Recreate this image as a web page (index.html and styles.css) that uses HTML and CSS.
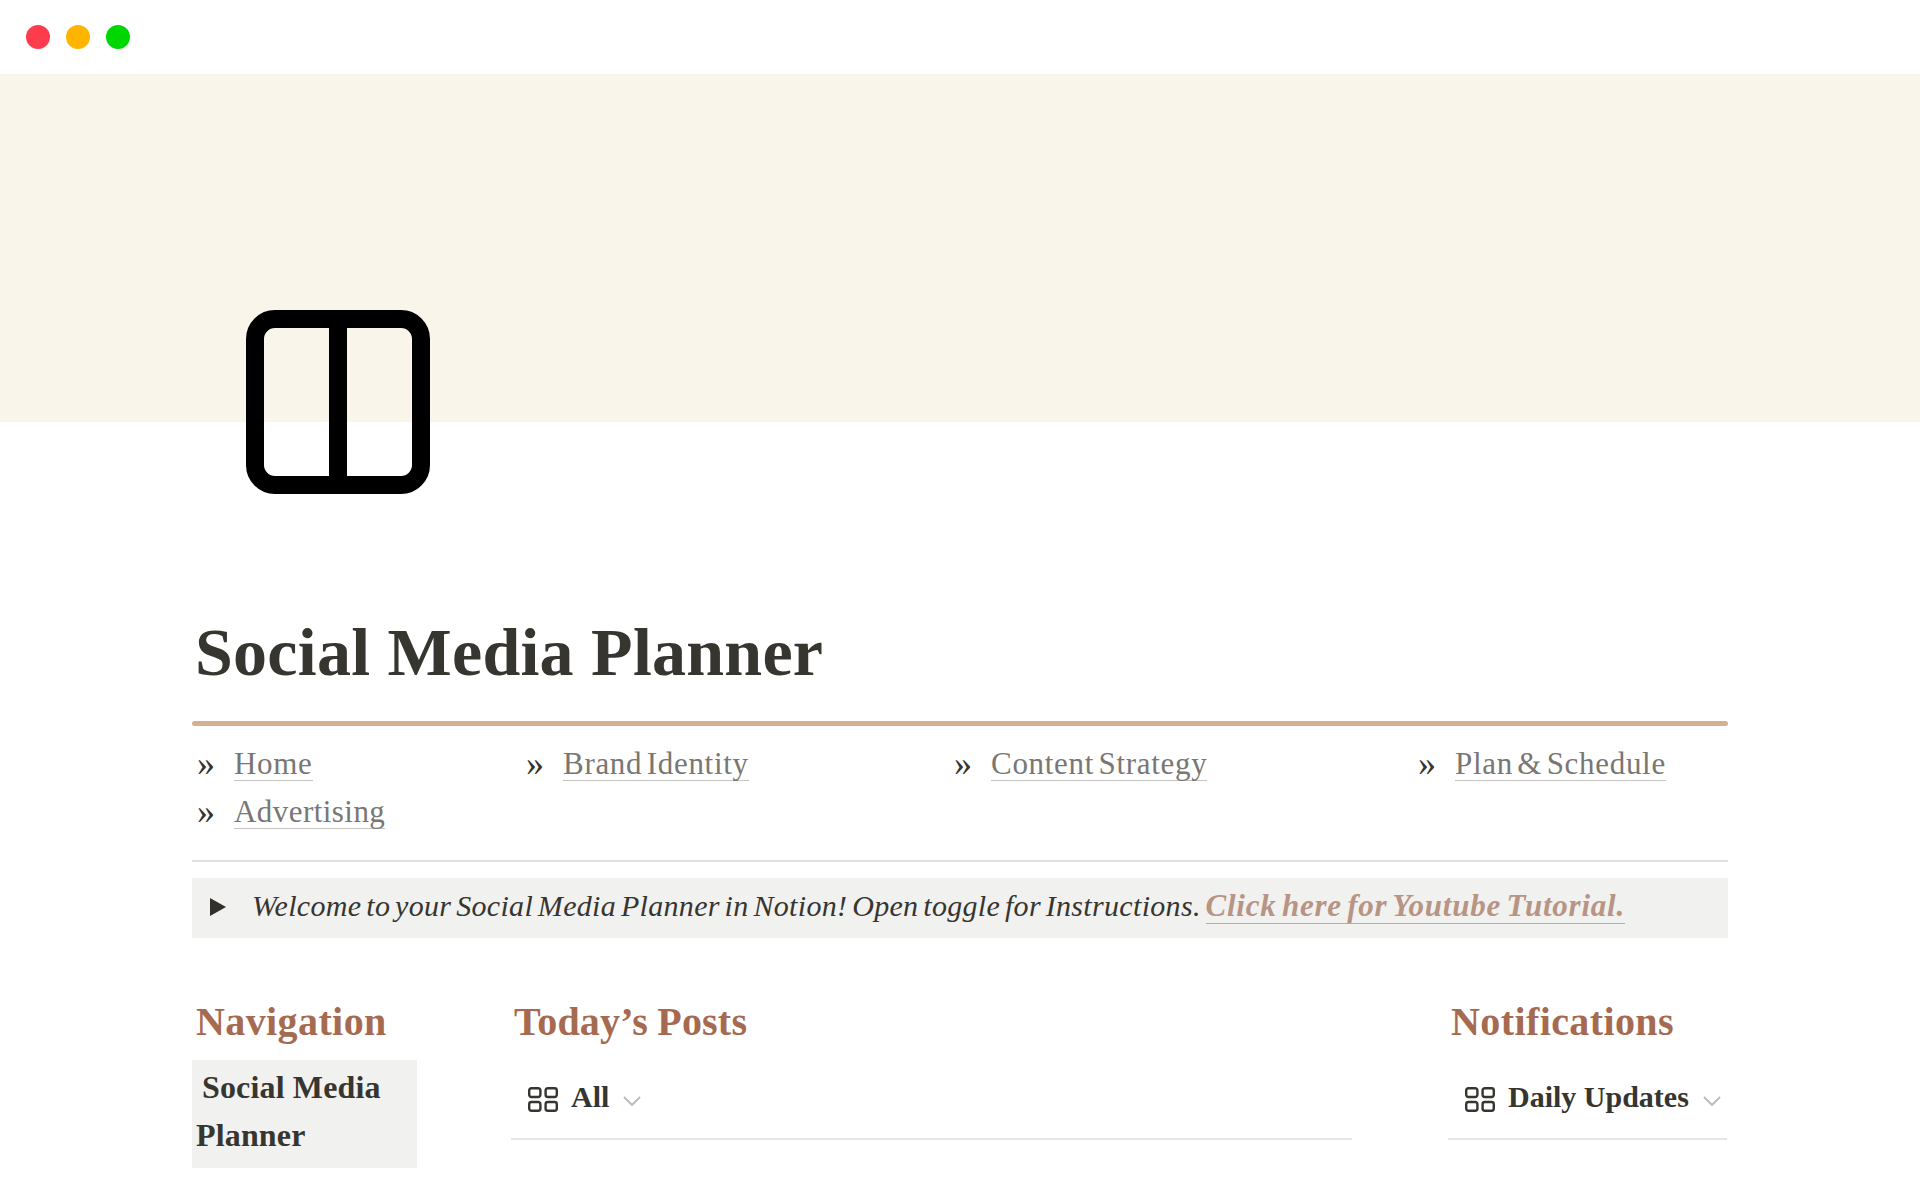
FILE: index.html
```html
<!DOCTYPE html>
<html lang="en">
<head>
<meta charset="utf-8">
<title>Social Media Planner</title>
<link rel="stylesheet" href="styles.css">
</head>
<body>
<header class="titlebar">
  <span class="light light-red"></span>
  <span class="light light-yellow"></span>
  <span class="light light-green"></span>
</header>
<div class="cover">
  <svg class="page-icon" viewBox="0 0 184 184" aria-hidden="true">
    <rect x="9" y="9" width="166" height="166" rx="20" fill="none" stroke="#000" stroke-width="18"/>
    <rect x="83" y="9" width="18" height="166" fill="#000"/>
  </svg>
</div>
<main class="page">
  <h1 class="title">Social Media Planner</h1>
  <div class="rule-tan"></div>
  <nav class="links">
    <div class="link-item"><span class="arrow">»</span><a class="link">Home</a></div>
    <div class="link-item"><span class="arrow">»</span><a class="link">Brand Identity</a></div>
    <div class="link-item"><span class="arrow">»</span><a class="link">Content Strategy</a></div>
    <div class="link-item"><span class="arrow">»</span><a class="link">Plan &amp; Schedule</a></div>
    <div class="link-item"><span class="arrow">»</span><a class="link link-tight">Advertising</a></div>
  </nav>
  <div class="rule-gray"></div>
  <div class="callout">
    <svg class="toggle" viewBox="0 0 16 18" aria-hidden="true"><polygon points="0,0 16,9 0,18" fill="#32302c"/></svg>
    <p class="callout-text">Welcome to your Social Media Planner in Notion! Open toggle for Instructions. <a class="tutorial">Click here for Youtube Tutorial.</a></p>
  </div>
  <section class="columns">
    <div class="col col-nav">
      <h2 class="heading">Navigation</h2>
      <div class="nav-box"><span class="nav-first">Social Media</span><br>Planner</div>
    </div>
    <div class="col col-posts">
      <h2 class="heading">Today’s Posts</h2>
      <div class="tabbar">
        <svg class="grid-icon" viewBox="0 0 30 25" aria-hidden="true"><g fill="none" stroke="#37352f" stroke-width="2.4"><rect x="1.2" y="1.2" width="11.2" height="8.8" rx="2.2"/><rect x="17.6" y="1.2" width="11.2" height="8.8" rx="2.2"/><rect x="1.2" y="15" width="11.2" height="8.8" rx="2.2"/><rect x="17.6" y="15" width="11.2" height="8.8" rx="2.2"/></g></svg>
        <span class="tab-label">All</span>
        <svg class="chev" viewBox="0 0 18 10" aria-hidden="true"><polyline points="1,1 9,9 17,1" fill="none" stroke="#bdbcb9" stroke-width="2"/></svg>
      </div>
    </div>
    <div class="col col-notes">
      <h2 class="heading">Notifications</h2>
      <div class="tabbar">
        <svg class="grid-icon" viewBox="0 0 30 25" aria-hidden="true"><g fill="none" stroke="#37352f" stroke-width="2.4"><rect x="1.2" y="1.2" width="11.2" height="8.8" rx="2.2"/><rect x="17.6" y="1.2" width="11.2" height="8.8" rx="2.2"/><rect x="1.2" y="15" width="11.2" height="8.8" rx="2.2"/><rect x="17.6" y="15" width="11.2" height="8.8" rx="2.2"/></g></svg>
        <span class="tab-label">Daily Updates</span>
        <svg class="chev" viewBox="0 0 18 10" aria-hidden="true"><polyline points="1,1 9,9 17,1" fill="none" stroke="#bdbcb9" stroke-width="2"/></svg>
      </div>
    </div>
  </section>
</main>
</body>
</html>
```
FILE: styles.css
```css
* { box-sizing: border-box; }
html, body { margin: 0; padding: 0; }
body {
  width: 1920px;
  height: 1200px;
  overflow: hidden;
  background: #fff;
  color: #37352f;
  font-family: "Liberation Serif", serif;
}
.titlebar {
  height: 74px;
  display: flex;
  gap: 16px;
  padding: 25px 0 0 26px;
}
.light { width: 24px; height: 24px; border-radius: 50%; }
.light-red { background: #ff3b4e; }
.light-yellow { background: #ffb400; }
.light-green { background: #00d600; }
.cover {
  position: relative;
  height: 348px;
  background: #f9f5ea;
}
.page-icon {
  position: absolute;
  left: 246px;
  top: 236px;
  width: 184px;
  height: 184px;
}
.page { margin-left: 192px; width: 1536px; }
.title {
  margin: 0;
  padding: 190px 0 0 3px;
  height: 299px;
  font-size: 68px;
  line-height: 80px;
  font-weight: 700;
  letter-spacing: 0.25px;
  color: #37352f;
}
.rule-tan { height: 5px; border-radius: 3px; background: #d3b091; }
.links {
  display: grid;
  grid-template-columns: 329px 428px 464px 1fr;
  grid-auto-rows: 48px;
  padding-top: 14px;
  height: 134px;
}
.link-item { display: flex; align-items: center; padding-left: 5px; font-size: 31px; }
.arrow { width: 37px; color: #37352f; font-size: 36px; line-height: 46px; margin-bottom: 2px; }
.link {
  color: #787774;
  line-height: 33px;
  padding-top: 2px;
  margin-bottom: 2px;
  border-bottom: 1px solid #c6c5c3;
  letter-spacing: 0.7px;
  word-spacing: -4px;
}
.link-tight { letter-spacing: 0.45px; }
.rule-gray { height: 2px; background: #e0e0de; }
.callout {
  display: flex;
  align-items: center;
  height: 60px;
  margin-top: 16px;
  padding: 0 0 5px 18px;
  background: #f1f1ef;
}
.toggle { width: 16px; height: 18px; margin-right: 26px; margin-top: 2px; }
.callout-text {
  margin: 0;
  font-size: 30px;
  font-style: italic;
  color: #37352f;
  white-space: nowrap;
  letter-spacing: 0.32px;
  word-spacing: -3px;
}
.tutorial {
  color: #b79484;
  font-size: 31px;
  font-weight: 700;
  letter-spacing: 0.75px;
  border-bottom: 1px solid #b3aea9;
}
.columns { display: flex; margin-top: 60px; }
.col { flex: none; }
.col-nav { width: 319px; }
.col-posts { width: 937px; }
.col-notes { width: 279px; }
.heading {
  margin: 0;
  padding-left: 4px;
  font-size: 40px;
  line-height: 48px;
  font-weight: 700;
  letter-spacing: 0.4px;
  color: #a56a50;
}
.col-posts .heading { padding-left: 3px; letter-spacing: 0.2px; word-spacing: -1px; }
.col-notes .heading { padding-left: 3px; }
.nav-box {
  width: 225px;
  height: 108px;
  margin-top: 14px;
  padding: 3px 0 0 4px;
  background: #f1f1ef;
  font-size: 32px;
  line-height: 48px;
  font-weight: 700;
  letter-spacing: 0.15px;
}
.nav-first { padding-left: 6px; }
.tabbar {
  display: flex;
  align-items: center;
  height: 94px;
  padding: 10px 0 0 17px;
  border-bottom: 2px solid #e6e6e4;
}
.col-posts .tabbar { width: 841px; }
.grid-icon { width: 30px; height: 25px; margin-right: 13px; margin-top: 5px; }
.tab-label { font-size: 30px; font-weight: 700; color: #37352f; }
.chev { width: 18px; height: 10px; margin-left: 14px; margin-top: 8px; }
```
